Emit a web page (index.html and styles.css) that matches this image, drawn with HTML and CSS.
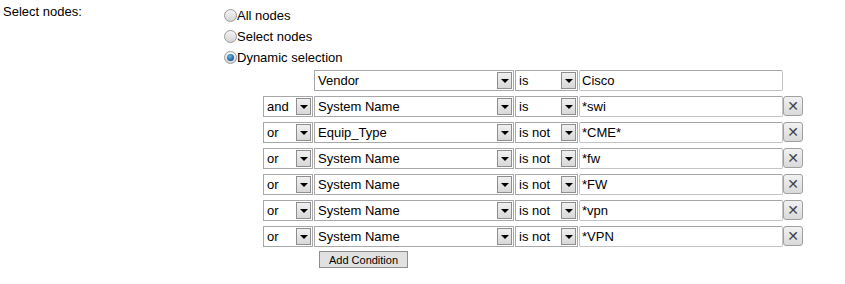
FILE: index.html
```html
<!DOCTYPE html>
<html lang="en">
<head>
  <meta charset="UTF-8" />
  <title>Select nodes</title>
  <link rel="stylesheet" href="styles.css">
</head>
<body>
  <div class="form-row">
    <div class="label">Select nodes:</div>
    <div class="choices">
      <label class="radio"><span class="dot"></span>All nodes</label>
      <label class="radio"><span class="dot"></span>Select nodes</label>
      <label class="radio"><span class="dot on"></span>Dynamic selection</label>

      <div class="conditions">
        <div class="cond">
          <span class="spacer"></span>
          <span class="sel field"><span class="val">Vendor</span><span class="arrow"></span></span>
          <span class="sel op"><span class="val">is</span><span class="arrow"></span></span>
          <span class="txt">Cisco</span>
        </div>
        <div class="cond">
          <span class="sel join"><span class="val">and</span><span class="arrow"></span></span>
          <span class="sel field"><span class="val">System Name</span><span class="arrow"></span></span>
          <span class="sel op"><span class="val">is</span><span class="arrow"></span></span>
          <span class="txt">*swi</span>
          <span class="del">&#x2715;</span>
        </div>
        <div class="cond">
          <span class="sel join"><span class="val">or</span><span class="arrow"></span></span>
          <span class="sel field"><span class="val">Equip_Type</span><span class="arrow"></span></span>
          <span class="sel op"><span class="val">is not</span><span class="arrow"></span></span>
          <span class="txt">*CME*</span>
          <span class="del">&#x2715;</span>
        </div>
        <div class="cond">
          <span class="sel join"><span class="val">or</span><span class="arrow"></span></span>
          <span class="sel field"><span class="val">System Name</span><span class="arrow"></span></span>
          <span class="sel op"><span class="val">is not</span><span class="arrow"></span></span>
          <span class="txt">*fw</span>
          <span class="del">&#x2715;</span>
        </div>
        <div class="cond">
          <span class="sel join"><span class="val">or</span><span class="arrow"></span></span>
          <span class="sel field"><span class="val">System Name</span><span class="arrow"></span></span>
          <span class="sel op"><span class="val">is not</span><span class="arrow"></span></span>
          <span class="txt">*FW</span>
          <span class="del">&#x2715;</span>
        </div>
        <div class="cond">
          <span class="sel join"><span class="val">or</span><span class="arrow"></span></span>
          <span class="sel field"><span class="val">System Name</span><span class="arrow"></span></span>
          <span class="sel op"><span class="val">is not</span><span class="arrow"></span></span>
          <span class="txt">*vpn</span>
          <span class="del">&#x2715;</span>
        </div>
        <div class="cond">
          <span class="sel join"><span class="val">or</span><span class="arrow"></span></span>
          <span class="sel field"><span class="val">System Name</span><span class="arrow"></span></span>
          <span class="sel op"><span class="val">is not</span><span class="arrow"></span></span>
          <span class="txt">*VPN</span>
          <span class="del">&#x2715;</span>
        </div>
        <div class="add-row">
          <button class="btn">Add Condition</button>
        </div>
      </div>
    </div>
  </div>
</body>
</html>
```

FILE: styles.css
```css
/* plain admin form look */
html, body { margin: 0; }
body {
  background: #fff;
  color: #000;
  font-family: "Liberation Sans", Arial, sans-serif;
  font-size: 13px;
  padding: 4px 3px;
}

.form-row { display: flex; }
.label { width: 219px; line-height: 16px; }

.choices { display: flex; flex-direction: column; }

/* radios */
.radio {
  display: flex;
  align-items: center;
  height: 21px;
  margin-left: 2px;
}
.radio:first-child { margin-top: 1px; }
.dot {
  width: 11px;
  height: 11px;
  border: 1px solid #9a9a9a;
  border-radius: 50%;
  background: linear-gradient(#f4f4f4, #d6d6d6);
  position: relative;
}
.dot.on::after {
  content: "";
  position: absolute;
  left: 2px; top: 2px;
  width: 7px; height: 7px;
  border-radius: 50%;
  background: radial-gradient(circle at 40% 35%, #6ab4e6, #1b5e96 70%, #0d3c66);
}

/* condition rows */
.conditions { margin-left: 41px; margin-top: -1px; }
.cond {
  display: flex;
  align-items: center;
  gap: 1px;
  height: 26px;
}
.spacer { width: 50px; }

.sel {
  display: flex;
  align-items: stretch;
  border: 1px solid #a8a8a8;
  background: #fff;
  box-sizing: border-box;
  height: 21px;
  padding: 1px;
}
.sel .val {
  flex: 1;
  padding-left: 2px;
  line-height: 17px;
  white-space: nowrap;
  overflow: hidden;
}
.sel .arrow {
  width: 15px;
  border: 1px solid #8e8e8e;
  background: linear-gradient(#f0f0f0, #d8d8d8);
  box-sizing: border-box;
  position: relative;
}
.sel .arrow::after {
  content: "";
  position: absolute;
  left: 3px; top: 6px;
  border-left: 4px solid transparent;
  border-right: 4px solid transparent;
  border-top: 4px solid #000;
}
.join { width: 50px; }
.field { width: 200px; }
.op { width: 63px; }

.txt {
  width: 204px;
  height: 21px;
  box-sizing: border-box;
  border: 1px solid #c4c4c4;
  border-top-color: #a6a6a6;
  border-radius: 2px;
  padding: 0 2px;
  line-height: 19px;
}

.del {
  width: 20px;
  height: 20px;
  box-sizing: border-box;
  border: 1px solid #a0a0a0;
  border-radius: 3px;
  background: linear-gradient(#f2f2f2, #d9d9d9);
  color: #444;
  font-size: 14px;
  line-height: 18px;
  text-align: center;
  font-family: "DejaVu Sans", sans-serif;
  margin-left: -1px;
}

.add-row { padding-left: 56px; padding-top: 2px; }
.btn {
  font-family: "Liberation Sans", Arial, sans-serif;
  font-size: 11px;
  width: 89px;
  height: 17px;
  padding: 0;
  border: 1px solid #8e8e8e;
  background: #e1e1e1;
  color: #000;
  border-radius: 0;
}
```
